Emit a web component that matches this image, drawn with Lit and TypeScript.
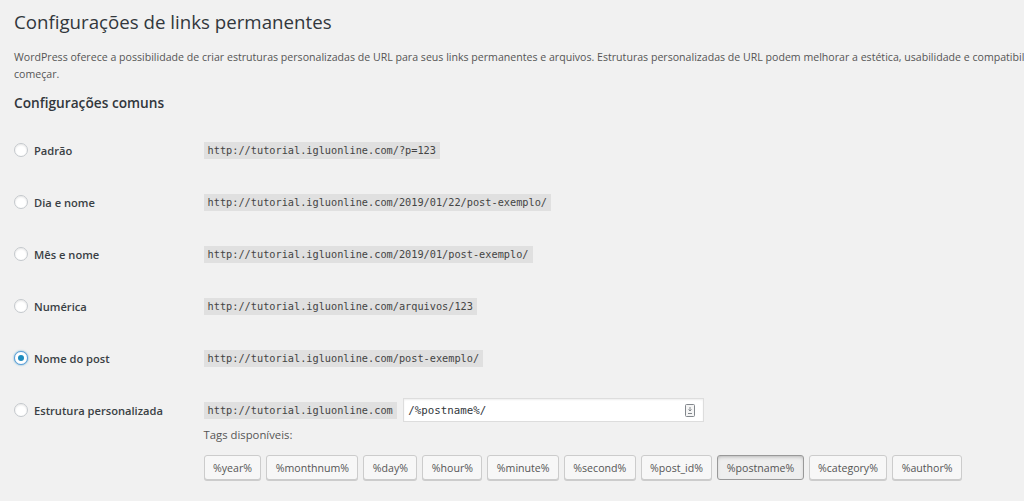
import { LitElement, html, css, svg } from "lit";
import { customElement } from "lit/decorators.js";

const ROWS = [
  ["Padrão", "http://tutorial.igluonline.com/?p=123", false],
  ["Dia e nome", "http://tutorial.igluonline.com/2019/01/22/post-exemplo/", false],
  ["Mês e nome", "http://tutorial.igluonline.com/2019/01/post-exemplo/", false],
  ["Numérica", "http://tutorial.igluonline.com/arquivos/123", false],
  ["Nome do post", "http://tutorial.igluonline.com/post-exemplo/", true],
] as const;

const TAGS = ["%year%", "%monthnum%", "%day%", "%hour%", "%minute%", "%second%", "%post_id%", "%postname%", "%category%", "%author%"];

@customElement("app-root")
export class AppRoot extends LitElement {
  static styles = css`
    :host {
      display: block;
      width: 1024px;
      height: 501px;
      overflow: hidden;
      background: #f1f1f1;
      font-family: "Open Sans", "Noto Sans", sans-serif;
      color: #444;
      box-sizing: border-box;
      padding: 8px 0 0 14px;
    }
    h1 {
      margin: 0;
      font-size: 18.7px;
      line-height: 28px;
      font-weight: 400;
      color: #32373c;
    }
    .intro {
      margin: 13px 0 0;
      font-size: 10.6px;
      line-height: 16.5px;
      white-space: nowrap;
      color: #555;
    }
    h2 {
      margin: 11px 0 0;
      font-size: 13.7px;
      line-height: 20px;
      font-weight: 600;
      color: #32373c;
    }
    .rows {
      margin-top: 25px;
      display: flex;
      flex-direction: column;
      gap: 28px;
    }
    .row {
      display: grid;
      grid-template-columns: 189.6px 1fr;
      align-items: start;
    }
    .choice {
      display: flex;
      align-items: center;
      gap: 6px;
      height: 24px;
      font-size: 11.15px;
      font-weight: 600;
      color: #3a3f44;
      white-space: nowrap;
    }
    .radio {
      width: 14px;
      height: 14px;
      flex: none;
      box-sizing: border-box;
      border-radius: 50%;
      border: 1px solid #c4c8cc;
      background: #fff;
      box-shadow: inset 0 1px 2px rgba(0, 0, 0, 0.1);
      display: flex;
      align-items: center;
      justify-content: center;
    }
    .radio.on {
      border-color: #5b9dd9;
      box-shadow: 0 0 2px rgba(30, 140, 190, 0.8);
    }
    .radio.on::after {
      content: "";
      width: 6px;
      height: 6px;
      border-radius: 50%;
      background: #1e8cbe;
    }
    .value {
      display: flex;
      align-items: center;
      height: 24px;
    }
    code {
      font-family: "DejaVu Sans Mono", "Liberation Mono", monospace;
      font-size: 10.26px;
      line-height: 17px;
      padding: 0 4px;
      background: rgba(0, 0, 0, 0.07);
      color: #444;
      white-space: nowrap;
    }
    .input {
      margin-left: 6.5px;
      width: 301px;
      height: 24px;
      box-sizing: border-box;
      background: #fff;
      border: 1px solid #ddd;
      box-shadow: inset 0 1px 2px rgba(0, 0, 0, 0.07);
      display: flex;
      align-items: center;
      justify-content: space-between;
      padding: 0 8px 0 4px;
      font-family: "DejaVu Sans Mono", "Liberation Mono", monospace;
      font-size: 10.8px;
      color: #32373c;
    }
    .input svg {
      display: block;
      width: 10px;
      height: 13px;
    }
    .avail {
      margin: 4px 0 0;
      font-size: 11.3px;
      line-height: 18px;
      color: #555;
    }
    .tags {
      display: flex;
      gap: 5px;
      margin-top: 11px;
    }
    button {
      appearance: none;
      font-family: inherit;
      font-size: 10.6px;
      height: 25px;
      padding: 0 8.4px;
      box-sizing: border-box;
      border: 1px solid #ccc;
      border-radius: 3px;
      background: #f7f7f7;
      box-shadow: 0 1px 0 #ccc;
      color: #555;
      white-space: nowrap;
    }
    button.active {
      background: #eee;
      border-color: #999;
      box-shadow: inset 0 2px 5px -3px rgba(0, 0, 0, 0.5);
    }
  `;

  private icon() {
    return svg`<svg viewBox="0 0 10 13" fill="none">
      <rect x="0.5" y="0.5" width="9" height="12" rx="1" stroke="#82878c" fill="#f5f5f5"/>
      <path d="M5 3v4M3.5 5.5L5 7l1.5-1.5M3 9.5h4" stroke="#82878c"/>
    </svg>`;
  }

  render() {
    return html`
      <h1>Configurações de links permanentes</h1>
      <p class="intro">WordPress oferece a possibilidade de criar estruturas personalizadas de URL para seus links permanentes e arquivos. Estruturas personalizadas de URL podem melhorar a estética, usabilidade e compatibilidade de seus links. Diversas tags estão disponíveis para<br />começar.</p>
      <h2>Configurações comuns</h2>
      <div class="rows">
        ${ROWS.map(
          ([label, url, on]) => html`
            <div class="row">
              <div class="choice"><span class="radio ${on ? "on" : ""}"></span>${label}</div>
              <div class="value"><code>${url}</code></div>
            </div>
          `
        )}
        <div class="row">
          <div class="choice"><span class="radio"></span>Estrutura personalizada</div>
          <div>
            <div class="value">
              <code>http://tutorial.igluonline.com</code>
              <div class="input"><span>/%postname%/</span>${this.icon()}</div>
            </div>
            <div class="avail">Tags disponíveis:</div>
            <div class="tags">
              ${TAGS.map((t) => html`<button class=${t === "%postname%" ? "active" : ""}>${t}</button>`)}
            </div>
          </div>
        </div>
      </div>
    `;
  }
}
